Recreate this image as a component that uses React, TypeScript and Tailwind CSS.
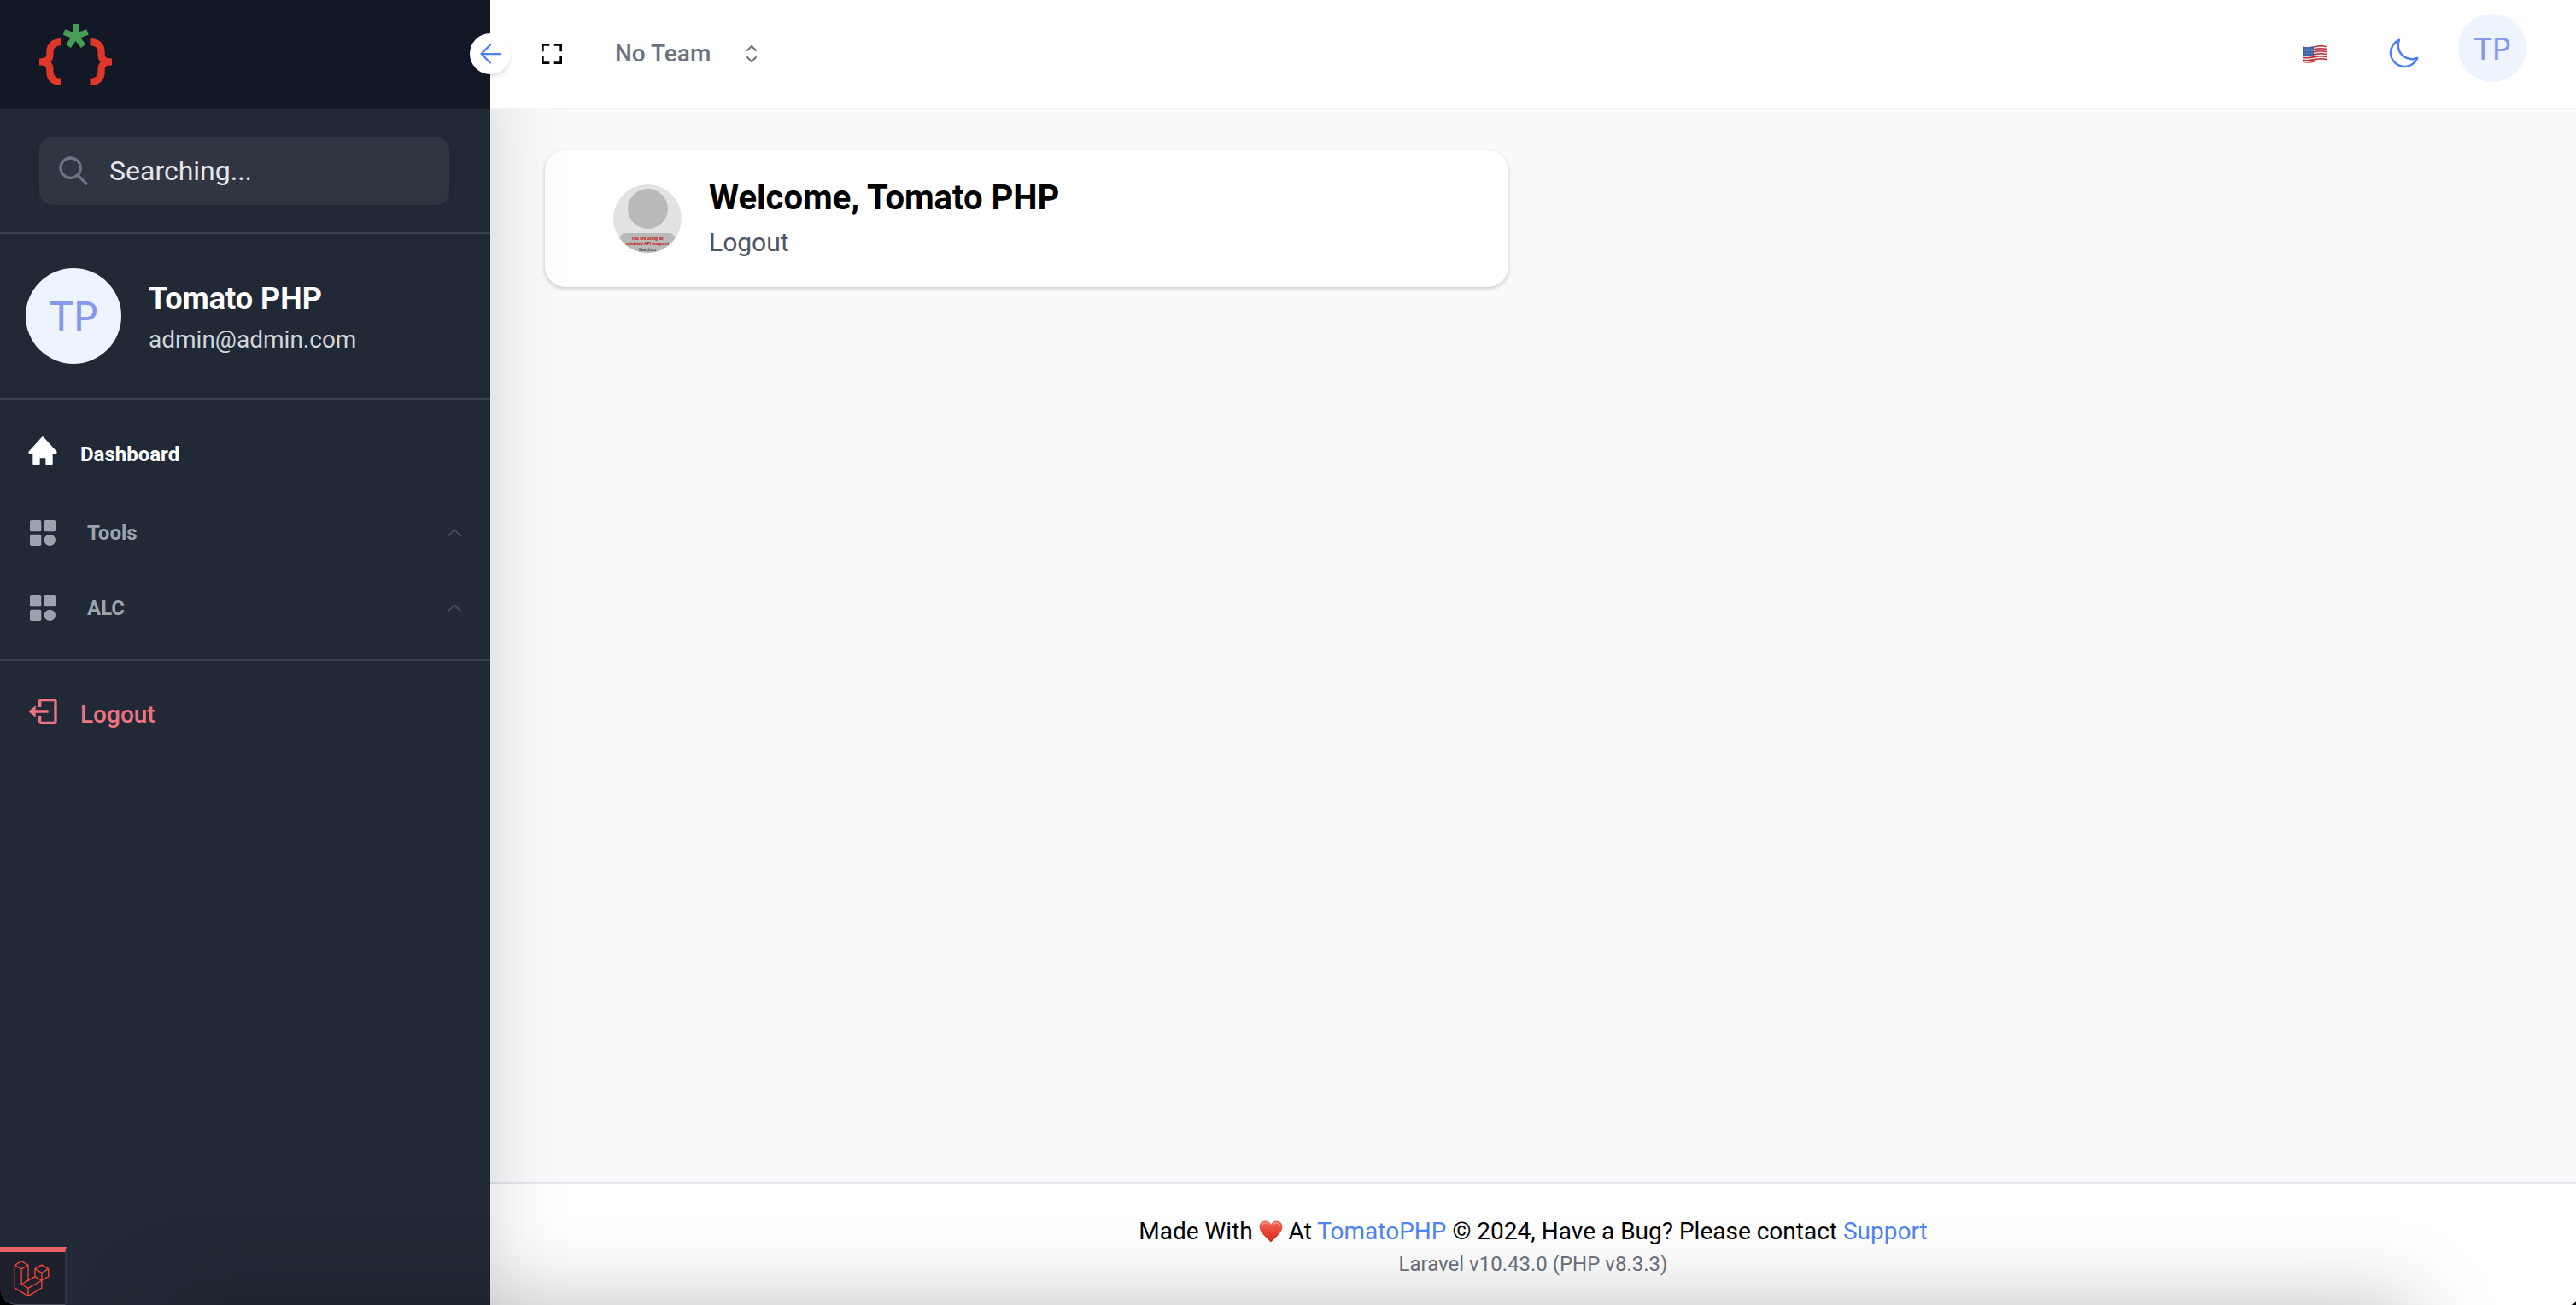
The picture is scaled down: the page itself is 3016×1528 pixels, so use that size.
import React from "react";
import {
  BiFullscreen,
  BiLogOut,
  BiSolidCategory,
  BiSolidHome,
} from "react-icons/bi";
import { SiLaravel } from "react-icons/si";

function OutlineIcon({
  d,
  className,
  strokeWidth = 1.5,
}: {
  d: string;
  className: string;
  strokeWidth?: number;
}) {
  return (
    <svg
      viewBox="0 0 24 24"
      fill="none"
      stroke="currentColor"
      strokeWidth={strokeWidth}
      strokeLinecap="round"
      strokeLinejoin="round"
      className={className}
      aria-hidden="true"
    >
      <path d={d} />
    </svg>
  );
}

const ICONS = {
  search: "M21 21l-6-6m2-5a7 7 0 11-14 0 7 7 0 0114 0z",
  chevronUp: "M4.5 15.75l7.5-7.5 7.5 7.5",
  upDown: "M8.25 15L12 18.75 15.75 15m-7.5-6L12 5.25 15.75 9",
  arrowLeft: "M12 19l-7-7 7-7M19.5 12H5",
  moon: "M21.752 15.002A9.718 9.718 0 0118 15.75c-5.385 0-9.75-4.365-9.75-9.75 0-1.33.266-2.597.748-3.752A9.753 9.753 0 003 11.25C3 16.635 7.365 21 12.75 21a9.753 9.753 0 009.002-5.998z",
};

function TomatoLogo() {
  return (
    <svg viewBox="0 0 85 72" fill="none" className="h-[72px] w-[85px]" role="img" aria-label="Tomato">
      <g stroke="#df382a" strokeWidth="8.2">
        <path d="M25.5 21.2C17 21.2 12.4 25 12.4 33V36C12.4 41.5 9 44.5 0 44.5C9 44.5 12.4 47.5 12.4 53V56C12.4 64 17 67.8 25.5 67.8" />
        <path d="M59.5 21.2C68 21.2 72.6 25 72.6 33V36C72.6 41.5 76 44.5 85 44.5C76 44.5 72.6 47.5 72.6 53V56C72.6 64 68 67.8 59.5 67.8" />
      </g>
      <g stroke="#479d56" strokeWidth="7">
        <path d="M42.6 0V15.5" />
        <path d="M29 9.5L42.6 14.5L56.5 9.5" />
        <path d="M34 26L42.6 14L51.5 26" />
      </g>
    </svg>
  );
}

function Flag() {
  return (
    <svg viewBox="0 0 28 21" className="h-[21px] w-7" role="img" aria-label="English">
      <defs>
        <clipPath id="flag-wave">
          <path d="M0 1.5C5 3 9 2 14 1C19 0 23 -.5 28 1.2V18.5C23 17 19 18 14 19.5C9 21 5 21 0 20Z" />
        </clipPath>
      </defs>
      <g clipPath="url(#flag-wave)">
        <rect width="28" height="21" fill="#f1eeee" />
        <g stroke="#bd2b36" strokeWidth="1.6" fill="none">
          {[1.6, 4.6, 7.6, 10.6, 13.6, 16.6, 19.6].map((y) => (
            <path key={y} d={`M0 ${y + 0.6}C5 ${y + 1.8} 9 ${y + 1} 14 ${y}C19 ${y - 1.2} 23 ${y - 1.4} 28 ${y}`} />
          ))}
        </g>
        <path d="M0 0H13V11.5C9 12.5 5 13 0 12Z" fill="#3f64a3" />
        <g fill="#a9bddb">
          {[2, 5, 8, 11].map((x) =>
            [4, 6.5, 9].map((y) => <circle key={`${x}-${y}`} cx={x} cy={y} r=".5" />),
          )}
        </g>
      </g>
    </svg>
  );
}

function Heart() {
  return (
    <svg viewBox="0 0 28 26" className="inline-block h-[26px] w-7 align-[-4px]" role="img" aria-label="love">
      <defs>
        <linearGradient id="heart-fill" x1="0" y1="0" x2="0" y2="1">
          <stop offset="0" stopColor="#f4695c" />
          <stop offset=".5" stopColor="#ea4637" />
          <stop offset="1" stopColor="#cf2c22" />
        </linearGradient>
      </defs>
      <path
        d="M14 25.5C11 21.5 1 15.5 .6 8C.4 3.5 3.6 .6 7.2 .6C10.4 .6 12.9 2.4 14 5C15.1 2.4 17.6 .6 20.8 .6C24.4 .6 27.6 3.5 27.4 8C27 15.5 17 21.5 14 25.5Z"
        fill="url(#heart-fill)"
      />
      <path d="M3.5 5.5C4.5 2.5 9 2 10.8 4.5M17.2 4.5C19 2 23.5 2.5 24.5 5.5" stroke="#f9a59b" strokeWidth="1.3" strokeLinecap="round" fill="none" />
    </svg>
  );
}

function ProfilePicture() {
  return (
    <svg viewBox="0 0 80 80" className="size-20 shrink-0" role="img" aria-label="Profile picture">
      <defs>
        <clipPath id="profile-round">
          <circle cx="40" cy="40" r="40" />
        </clipPath>
      </defs>
      <g clipPath="url(#profile-round)">
        <rect width="80" height="80" fill="#e2e2e2" />
        <circle cx="40.5" cy="28.5" r="23.5" fill="#b9b9b9" />
        <rect x="7" y="57" width="66" height="32" rx="8" fill="#b9b9b9" />
        <g textAnchor="middle" fontSize="5" fontFamily="Roboto, sans-serif">
          <text x="40" y="64.5" fontWeight="700" fill="#c3170f">You are using an</text>
          <text x="40" y="70.5" fontWeight="700" fill="#c3170f">outdated API endpoint</text>
          <text x="40" y="77.5" fill="#333333">See docs</text>
        </g>
      </g>
    </svg>
  );
}

function NavLink({ icon, children, className }: { icon: React.ReactNode; children: React.ReactNode; className: string }) {
  return (
    <a href="#" className={`flex items-center gap-6 px-[30px] ${className}`}>
      <span className="pb-2">{icon}</span>
      {children}
    </a>
  );
}

function NavGroup({ label }: { label: string }) {
  return (
    <button type="button" aria-expanded="false" className="flex h-[88px] w-full items-center gap-8 px-[30px] text-2xl font-bold text-[#9ca3af]">
      <BiSolidCategory className="size-10" />
      {label}
      <OutlineIcon d={ICONS.chevronUp} className="ml-auto size-6 text-[#4b5563]" />
    </button>
  );
}

function Sidebar() {
  return (
    <aside className="relative z-10 flex w-[574px] shrink-0 flex-col bg-[#222936] shadow-[0_50px_100px_-24px_rgba(0,0,0,0.25)]">
      <div className="flex h-32 items-center bg-[#121826] pl-[46px]">
        <a href="#"><TomatoLogo /></a>
      </div>

      <div className="border-b-2 border-[#383f4d] py-8 pr-12 pl-[46px]">
        <label className="flex h-20 items-center gap-[22px] rounded-2xl bg-[#2f3541] px-5">
          <OutlineIcon d={ICONS.search} strokeWidth={2} className="size-10 shrink-0 text-[#6b7280]" />
          <input
            type="search"
            aria-label="Search"
            placeholder="Searching..."
            className="w-full min-w-0 bg-transparent text-[32px] text-[#e5e7eb] outline-none placeholder:text-[#e5e7eb]"
          />
        </label>
      </div>

      <div className="flex items-center gap-8 border-b-2 border-[#383f4d] px-[30px] py-10">
        <div className="flex size-28 shrink-0 items-center justify-center rounded-full bg-[#edf4fe] font-[Lato] text-5xl text-[#8799ee]">
          TP
        </div>
        <div className="pt-1">
          <h2 className="text-4xl leading-[52px] font-bold text-white">Tomato PHP</h2>
          <p className="text-[28px] leading-[44px] text-[#d1d5db]">admin@admin.com</p>
        </div>
      </div>

      <nav className="border-b-2 border-[#383f4d] pt-5 pb-4">
        <NavLink icon={<BiSolidHome className="size-10" />} className="mb-1 h-[88px] text-2xl font-bold text-white">
          Dashboard
        </NavLink>
        <NavGroup label="Tools" />
        <NavGroup label="ALC" />
      </nav>

      <NavLink icon={<BiLogOut className="size-10" />} className="h-[126px] text-[28px] font-medium text-[#ec7482]">
        Logout
      </NavLink>
    </aside>
  );
}

function Header() {
  return (
    <header className="relative z-20 flex h-32 items-center border-b-2 border-[#f3f3f4] bg-white pr-[58px] pl-14">
      <button
        type="button"
        aria-label="Collapse sidebar"
        className="absolute top-[39px] -left-6 flex size-12 items-center justify-center rounded-full bg-white text-[#4a80f0] shadow-md"
      >
        <OutlineIcon d={ICONS.arrowLeft} className="size-9" />
      </button>
      <button type="button" aria-label="Full screen" className="text-black">
        <BiFullscreen className="size-8" />
      </button>
      <button type="button" className="ml-[58px] flex items-center gap-8 text-[28px] font-medium text-[#6b7280]">
        No Team
        <OutlineIcon d={ICONS.upDown} className="size-8" />
      </button>
      <div className="ml-auto flex items-center gap-[70px]">
        <button type="button"><Flag /></button>
        <button type="button" aria-label="Dark mode" className="text-[#4a80f0]">
          <OutlineIcon d={ICONS.moon} className="size-10" />
        </button>
      </div>
      <button
        type="button"
        className="mt-4 ml-11 flex size-20 items-center justify-center self-start rounded-full bg-[#edf4fe] font-[Lato] text-4xl text-[#8799ee]"
      >
        TP
      </button>
    </header>
  );
}

function DebugBar() {
  return (
    <div className="fixed bottom-0 left-0 z-30 bg-black">
      <button
        type="button"
        aria-label="Open debug bar"
        className="flex h-[68px] w-[78px] items-center rounded-bl-[20px] border-t-[6px] border-r-2 border-b border-t-[#e96065] border-r-[#2e3448] border-b-[#4b4e58] bg-[#1e212b] pl-4 text-[#f4453a]"
      >
        <SiLaravel className="size-[42px]" />
      </button>
    </div>
  );
}

export default function App() {
  return (
    <div className="flex min-h-screen bg-[#f9fafc] font-[Roboto,sans-serif]">
      <Sidebar />
      <div className="flex min-w-0 flex-1 flex-col">
        <Header />
        <main className="grid flex-1 grid-cols-2 content-start gap-x-[58px] px-16 py-12">
          <section className="flex h-40 items-center gap-8 rounded-3xl bg-white px-20 shadow-[0_2px_6px_rgba(0,0,0,0.1),0_2px_4px_rgba(0,0,0,0.1)]">
            <ProfilePicture />
            <div>
              <h1 className="text-[40px] leading-[56px] font-bold text-black">Welcome, Tomato PHP</h1>
              <a href="#" className="block text-[30px] leading-[48px] text-[#4b5563]">Logout</a>
            </div>
          </section>
        </main>
        <footer className="border-t-2 border-[#e5e6ea] bg-white pt-9 pb-[30px] text-center">
          <p className="text-[28px] leading-10 text-black">
            Made With <Heart /> At <a href="#" className="text-[#5084f3]">TomatoPHP</a> © 2024, Have a Bug? Please contact{" "}
            <a href="#" className="text-[#5084f3]">Support</a>
          </p>
          <p className="text-2xl leading-9 text-[#6b7280]">Laravel v10.43.0 (PHP v8.3.3)</p>
        </footer>
      </div>
      <div className="pointer-events-none fixed inset-x-[190px] top-full z-20 h-40 shadow-[0_0_100px_rgba(0,0,0,0.25)]" />
      <DebugBar />
      <svg viewBox="0 0 6 6" className="fixed right-0 bottom-0 z-30 size-1.5" aria-hidden="true">
        <path d="M6 1V6H0C3 5 5 4 6 1Z" fill="#000000" />
      </svg>
    </div>
  );
}
